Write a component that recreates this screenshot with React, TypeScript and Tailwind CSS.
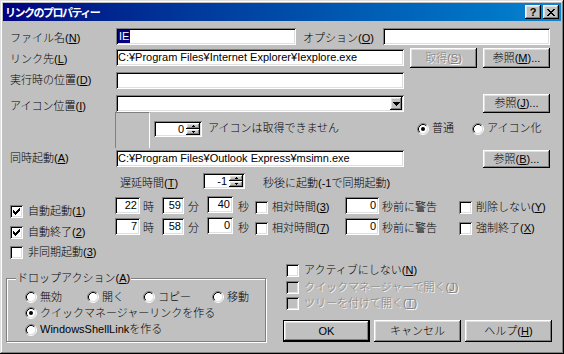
import type { ReactNode } from 'react';

const sunken =
  'bg-white shadow-[inset_1px_1px_0_#808080,inset_-1px_-1px_0_#ffffff,inset_2px_2px_0_#000000,inset_-2px_-2px_0_#dfdfdf]';
const raised =
  'bg-[#c0c0c0] shadow-[inset_-1px_-1px_0_#000000,inset_1px_1px_0_#ffffff,inset_-2px_-2px_0_#808080,inset_2px_2px_0_#dfdfdf]';
const grayText = 'text-[#808080] [text-shadow:1px_1px_0_#ffffff]';

function Field({ className = '', right, children }: { className?: string; right?: boolean; children?: ReactNode }) {
  return (
    <div
      className={`${sunken} h-[17px] flex items-center shrink-0 overflow-hidden whitespace-nowrap ${
        right ? 'justify-end pr-[3px]' : 'pl-[2px]'
      } ${className}`}
    >
      {children}
    </div>
  );
}

function Btn({ className = '', disabled, children }: { className?: string; disabled?: boolean; children: ReactNode }) {
  return (
    <div
      className={`${raised} flex items-center justify-center shrink-0 whitespace-nowrap ${disabled ? grayText : ''} ${className}`}
    >
      {children}
    </div>
  );
}

function Tri({ up }: { up?: boolean }) {
  return (
    <svg width="3" height="2" viewBox="0 0 3 2" shapeRendering="crispEdges">
      {up ? (
        <>
          <rect x="1" y="0" width="1" height="1" fill="#000" />
          <rect x="0" y="1" width="3" height="1" fill="#000" />
        </>
      ) : (
        <>
          <rect x="0" y="0" width="3" height="1" fill="#000" />
          <rect x="1" y="1" width="1" height="1" fill="#000" />
        </>
      )}
    </svg>
  );
}

function Spin({ className = '', value }: { className?: string; value: string }) {
  return (
    <div className={`${sunken} h-[16px] flex shrink-0 ${className}`}>
      <div className="flex-1 flex items-center justify-end pr-[2px]">{value}</div>
      <div className="w-[16px] flex flex-col py-[2px] pr-[2px]">
        <div className={`${raised} flex-1 flex items-center justify-center`}>
          <Tri up />
        </div>
        <div className={`${raised} flex-1 flex items-center justify-center`}>
          <Tri />
        </div>
      </div>
    </div>
  );
}

function CheckMark() {
  return (
    <svg width="7" height="7" viewBox="0 0 7 7" shapeRendering="crispEdges" className="m-[3px]">
      {[2, 3, 4, 3, 2, 1, 0].map((y, x) => (
        <rect key={x} x={x} y={y} width="1" height="3" fill="#000" />
      ))}
    </svg>
  );
}

function Check({
  className = '',
  checked,
  disabled,
  gap = 'gap-[5px]',
  children,
}: {
  className?: string;
  checked?: boolean;
  disabled?: boolean;
  gap?: string;
  children: ReactNode;
}) {
  return (
    <div className={`flex items-center shrink-0 whitespace-nowrap ${gap} ${className}`}>
      <div
        className={`w-[13px] h-[13px] shrink-0 shadow-[inset_1px_1px_0_#808080,inset_-1px_-1px_0_#ffffff,inset_2px_2px_0_#000000,inset_-2px_-2px_0_#dfdfdf] ${
          disabled ? 'bg-[#c0c0c0]' : 'bg-white'
        }`}
      >
        {checked && <CheckMark />}
      </div>
      <span className={disabled ? grayText : ''}>{children}</span>
    </div>
  );
}

function Radio({ checked }: { checked?: boolean }) {
  return (
    <svg width="12" height="12" viewBox="0 0 12 12" className="shrink-0">
      <circle cx="6" cy="6" r="4.5" fill="#fff" />
      <path d="M2.11 9.89A5.5 5.5 0 0 1 9.89 2.11" fill="none" stroke="#808080" />
      <path d="M9.89 2.11A5.5 5.5 0 0 1 2.11 9.89" fill="none" stroke="#fff" />
      <path d="M2.82 9.18A4.5 4.5 0 0 1 9.18 2.82" fill="none" stroke="#000" />
      <path d="M9.18 2.82A4.5 4.5 0 0 1 2.82 9.18" fill="none" stroke="#dfdfdf" />
      {checked && <circle cx="6" cy="6" r="2" fill="#000" />}
    </svg>
  );
}

function RadioItem({ className = '', checked, children }: { className?: string; checked?: boolean; children: ReactNode }) {
  return (
    <div className={`flex items-center gap-[3px] shrink-0 whitespace-nowrap ${className}`}>
      <Radio checked={checked} />
      <span>{children}</span>
    </div>
  );
}

function TitleBtn({ className = '', children }: { className?: string; children: ReactNode }) {
  return (
    <div className={`${raised} w-[16px] h-[14px] flex items-center justify-center ${className}`}>{children}</div>
  );
}

export default function App() {
  return (
    <div className="w-[564px] h-[354px] bg-[#c0c0c0] p-[3px] overflow-hidden text-black text-[11px] leading-[13px] font-light font-['Liberation_Sans','Noto_Sans_CJK_JP',sans-serif] shadow-[inset_-1px_-1px_0_#000000,inset_1px_1px_0_#dfdfdf,inset_-2px_-2px_0_#808080,inset_2px_2px_0_#ffffff]">
      {/* title bar */}
      <div className="h-[18px] flex items-center bg-linear-to-r from-[#000080] to-[#1084d0] pl-[2px] pr-[2px]">
        <span className="flex-1 text-white font-bold tracking-[-1.5px] font-['Noto_Sans_CJK_JP',sans-serif]">
          リンクのプロパティー
        </span>
        <TitleBtn>
          <span className="font-bold text-[11px] leading-[11px]">?</span>
        </TitleBtn>
        <TitleBtn className="ml-[2px]">
          <svg width="8" height="7" viewBox="0 0 8 7" shapeRendering="crispEdges">
            <path d="M0 0h2v1H0zM1 1h2v1H1zM2 2h4v1H2zM3 3h2v1H3zM2 4h4v1H2zM1 5h2v1H1zM0 6h2v1H0zM6 0h2v1H6zM5 1h2v1H5zM5 5h2v1H5zM6 6h2v1H6z" fill="#000" />
          </svg>
        </TitleBtn>
      </div>

      <div className="flex flex-col">
        {/* file name / options */}
        <div className="flex items-start h-[18px] mt-[6px] pl-[7px]">
          <span className="w-[106px] mt-[5px] shrink-0">
            ファイル名(<u>N</u>)
          </span>
          <Field className="w-[180px] mt-[1px] pl-[1px]">
            <span className="bg-[#000080] text-white px-[1px]">IE</span>
          </Field>
          <span className="w-[80px] ml-[7px] mt-[5px] shrink-0">
            オプション(<u>O</u>)
          </span>
          <Field className="w-[167px] mt-[1px]" />
        </div>

        {/* link target */}
        <div className="flex items-start h-[20px] mt-[3px] pl-[7px]">
          <span className="w-[106px] mt-[5px] shrink-0">
            リンク先(<u>L</u>)
          </span>
          <Field className="w-[288px] mt-[1px]">C:¥Program Files¥Internet Explorer¥Iexplore.exe</Field>
          <Btn className="w-[67px] h-[20px] ml-[6px]" disabled>
            取得(<u>S</u>)
          </Btn>
          <Btn className="w-[67px] h-[20px] ml-[6px]">
            参照(<u>M</u>)...
          </Btn>
        </div>

        {/* run position */}
        <div className="flex items-start h-[17px] mt-[4px] pl-[7px]">
          <span className="w-[106px] mt-[2px] shrink-0">
            実行時の位置(<u>D</u>)
          </span>
          <Field className="w-[288px]" />
        </div>

        {/* icon location */}
        <div className="flex items-start h-[19px] mt-[5px] pl-[7px]">
          <span className="w-[106px] mt-[6px] shrink-0">
            アイコン位置(<u>I</u>)
          </span>
          <div className={`${sunken} w-[288px] h-[17px] mt-[1px] flex justify-end items-start p-[2px] shrink-0`}>
            <div className={`${raised} w-[12px] h-[13px] flex items-center justify-center`}>
              <svg width="7" height="4" viewBox="0 0 7 4" shapeRendering="crispEdges">
                <path d="M0 0h7v1H0zM1 1h5v1H1zM2 2h3v1H2zM3 3h1v1H3z" fill="#000" />
              </svg>
            </div>
          </div>
          <Btn className="w-[67px] h-[19px] ml-[79px]">
            参照(<u>J</u>)...
          </Btn>
        </div>

        {/* icon preview + index */}
        <div className="flex items-start h-[36px] -mt-[1px] pl-[7px]">
          <div className="ml-[105px] w-[35px] h-[36px] shrink-0 border-l border-t border-r border-l-[#808080] border-t-[#808080] border-r-white" />
          <Spin className="w-[48px] ml-[4px] mt-[9px]" value="0" />
          <span className="w-[209px] ml-[6px] mt-[10px] shrink-0 whitespace-nowrap">アイコンは取得できません</span>
          <RadioItem className="w-[55px] mt-[10px]" checked>
            普通
          </RadioItem>
          <RadioItem className="mt-[10px]">アイコン化</RadioItem>
        </div>

        {/* simultaneous launch */}
        <div className="flex items-start h-[18px] mt-[2px] pl-[7px]">
          <span className="w-[106px] mt-[2px] shrink-0">
            同時起動(<u>A</u>)
          </span>
          <Field className="w-[288px]">C:¥Program Files¥Outlook Express¥msimn.exe</Field>
          <Btn className="w-[67px] h-[18px] ml-[79px]">
            参照(<u>B</u>)...
          </Btn>
        </div>

        {/* delay */}
        <div className="flex items-start h-[16px] mt-[5px] pl-[7px]">
          <span className="w-[83px] ml-[110px] mt-[4px] shrink-0">
            遅延時間(<u>T</u>)
          </span>
          <Spin className="w-[42px]" value="-1" />
          <span className="ml-[18px] mt-[4px] whitespace-nowrap">秒後に起動(-1で同期起動)</span>
        </div>

        {/* auto start */}
        <div className="flex items-start h-[21px] mt-[7px] pl-[7px]">
          <Check className="w-[105px] mt-[9px]" checked>
            自動起動(<u>1</u>)
          </Check>
          <Field className="w-[25px] h-[16px] mt-[1px]" right>
            22
          </Field>
          <span className="w-[22px] pl-[3px] mt-[5px] shrink-0">時</span>
          <Field className="w-[22px] h-[16px] mt-[1px]" right>
            59
          </Field>
          <span className="w-[23px] pl-[4px] mt-[5px] shrink-0">分</span>
          <Field className="w-[26px] h-[16px]" right>
            40
          </Field>
          <span className="w-[22px] pl-[5px] mt-[5px] shrink-0">秒</span>
          <Check className="w-[90px] mt-[5px]" gap="gap-[4px]">
            相対時間(<u>3</u>)
          </Check>
          <Field className="w-[34px] h-[16px] mt-[1px]" right>
            0
          </Field>
          <span className="w-[80px] pl-[3px] mt-[5px] shrink-0">秒前に警告</span>
          <Check className="mt-[5px]" gap="gap-[4px]">
            削除しない(<u>Y</u>)
          </Check>
        </div>

        {/* auto end */}
        <div className="flex items-start h-[21px] pl-[7px]">
          <Check className="w-[105px] mt-[9px]" checked>
            自動終了(<u>2</u>)
          </Check>
          <Field className="w-[25px] h-[16px] mt-[1px]" right>
            7
          </Field>
          <span className="w-[22px] pl-[3px] mt-[5px] shrink-0">時</span>
          <Field className="w-[22px] h-[16px] mt-[1px]" right>
            58
          </Field>
          <span className="w-[23px] pl-[4px] mt-[5px] shrink-0">分</span>
          <Field className="w-[26px] h-[16px]" right>
            0
          </Field>
          <span className="w-[22px] pl-[5px] mt-[5px] shrink-0">秒</span>
          <Check className="w-[90px] mt-[5px]" gap="gap-[4px]">
            相対時間(<u>7</u>)
          </Check>
          <Field className="w-[34px] h-[16px] mt-[1px]" right>
            0
          </Field>
          <span className="w-[80px] pl-[3px] mt-[5px] shrink-0">秒前に警告</span>
          <Check className="mt-[5px]" gap="gap-[4px]">
            強制終了(<u>X</u>)
          </Check>
        </div>

        {/* async */}
        <div className="flex items-start h-[13px] mt-[8px] pl-[7px]">
          <Check>
            非同期起動(<u>3</u>)
          </Check>
        </div>

        {/* bottom: drop action group + options + buttons */}
        <div className="flex items-start pl-[3px]">
          <div className="relative w-[260px] h-[64px] mt-[19px] shrink-0 border border-[#808080] shadow-[inset_1px_1px_0_#ffffff,1px_1px_0_#ffffff] pt-[10px] pl-[18px] flex flex-col">
            <span className="absolute left-[9px] -top-[7px] px-[1px] bg-[#c0c0c0] whitespace-nowrap">
              ドロップアクション(<u>A</u>)
            </span>
            <div className="flex items-center h-[16px]">
              <RadioItem className="w-[62px]">無効</RadioItem>
              <RadioItem className="w-[56px]">開く</RadioItem>
              <RadioItem className="w-[69px]">コピー</RadioItem>
              <RadioItem>移動</RadioItem>
            </div>
            <div className="flex items-center h-[16px]">
              <RadioItem checked>クイックマネージャーリンクを作る</RadioItem>
            </div>
            <div className="flex items-center h-[17px]">
              <RadioItem>WindowsShellLinkを作る</RadioItem>
            </div>
          </div>

          <div className="flex flex-col ml-[17px] mt-[3px]">
            <div className="flex items-center h-[17px] pl-[3px]">
              <Check>
                アクティブにしない(<u>N</u>)
              </Check>
            </div>
            <div className="flex items-center h-[16px] pl-[3px]">
              <Check disabled>
                クイックマネージャーで開く(<u>J</u>)
              </Check>
            </div>
            <div className="flex items-center h-[16px] pl-[3px]">
              <Check disabled>
                ツリーを付けて開く(<u>T</u>)
              </Check>
            </div>
            <div className="flex gap-[4px] mt-[9px]">
              <div className="w-[87px] h-[22px] border border-black flex">
                <Btn className="flex-1">OK</Btn>
              </div>
              <Btn className="w-[87px] h-[22px]">キャンセル</Btn>
              <Btn className="w-[87px] h-[22px]">
                ヘルプ(<u>H</u>)
              </Btn>
            </div>
          </div>
        </div>
      </div>
    </div>
  );
}
